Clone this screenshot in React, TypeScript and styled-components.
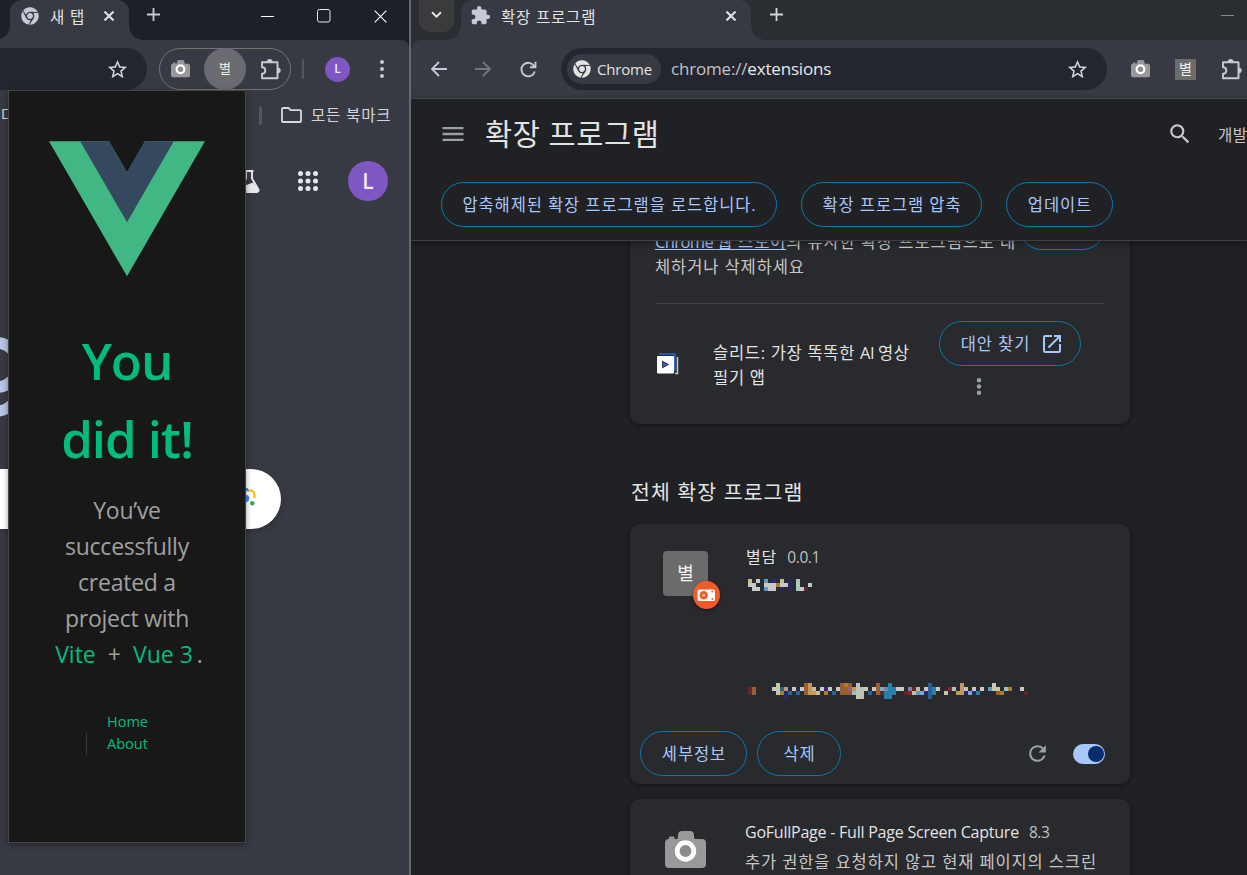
import React from "react";
import styled, { createGlobalStyle, css } from "styled-components";
import { FaChrome } from "react-icons/fa";
import { MdExtension, MdMenu, MdSearch, MdStarBorder, MdRefresh, MdOpenInNew } from "react-icons/md";

const GlobalStyle = createGlobalStyle`
  * { box-sizing: border-box; }
  body {
    margin: 0;
    overflow: hidden;
    background: #202124;
    font-family: "Open Sans", "Noto Sans CJK KR", sans-serif;
    color: #e3e3e3;
  }
  svg { display: block; flex: none; }
`;

const Desktop = styled.div`
  display: flex;
  width: 1247px;
  height: 875px;
  overflow: hidden;
`;

/* ---------- shared browser chrome ---------- */

const LeftWindow = styled.section`
  position: relative;
  display: flex;
  flex-direction: column;
  width: 411px;
  flex: none;
  background: #383a43;
  border-right: 2px solid #69696c;
  overflow: hidden;
`;

const RightWindow = styled.section`
  display: flex;
  flex-direction: column;
  flex: 1;
  min-width: 0;
  overflow: hidden;
  background: #202124;
`;

const TabStrip = styled.header<{ $bg: string; $pad: number }>`
  display: flex;
  align-items: flex-start;
  height: 40px;
  flex: none;
  padding-left: ${(p) => p.$pad}px;
  background: ${(p) => p.$bg};
`;

const Tab = styled.div<{ $width: number; $pad: number }>`
  position: relative;
  display: flex;
  align-items: center;
  width: ${(p) => p.$width}px;
  height: 40px;
  padding: 0 15px 9px ${(p) => p.$pad}px;
  background: #383a43;
  border-radius: 12px 12px 0 0;
  &::before,
  &::after {
    content: "";
    position: absolute;
    bottom: 0;
    width: 14px;
    height: 14px;
  }
  &::before {
    left: -14px;
    background: radial-gradient(circle at 0 0, transparent 13.5px, #383a43 14px);
  }
  &::after {
    right: -14px;
    background: radial-gradient(circle at 100% 0, transparent 13.5px, #383a43 14px);
  }
`;

const TabTitle = styled.span<{ $gap: number }>`
  flex: 1;
  margin-left: ${(p) => p.$gap}px;
  font-size: 15.5px;
  line-height: 20px;
  letter-spacing: 0.8px;
  white-space: nowrap;
  padding-top: 2px;
`;

const NewTab = styled.div<{ $left: number }>`
  display: flex;
  margin: 8px 0 0 ${(p) => p.$left}px;
`;

const WindowControls = styled.div`
  display: flex;
  align-items: center;
  justify-content: space-between;
  margin-left: auto;
  width: 126px;
  height: 32px;
  margin-right: 22px;
`;

const TabSearch = styled.div`
  display: flex;
  align-items: center;
  justify-content: center;
  width: 35px;
  height: 32px;
  padding-bottom: 2px;
  margin-right: 7px;
  border-radius: 0 0 11px 11px;
  background: #3b3b3d;
`;

const Toolbar = styled.div<{ $corner: string }>`
  display: flex;
  align-items: center;
  flex: none;
  height: 58px;
  background: #383a43;
  border-radius: ${(p) => p.$corner};
`;

const ToolbarBack = styled.div<{ $bg: string }>`
  flex: none;
  background: linear-gradient(${(p) => p.$bg} 10px, #383a43 10px);
`;

const Omnibox = styled.div<{ $width: number; $radius: string }>`
  display: flex;
  align-items: center;
  justify-content: space-between;
  width: ${(p) => p.$width}px;
  flex: none;
  height: 42px;
  padding: 0 18px 0 6px;
  background: #23262e;
  border-radius: ${(p) => p.$radius};
`;

const SiteChip = styled.div`
  display: flex;
  align-items: center;
  gap: 6px;
  width: 94px;
  height: 30px;
  padding-left: 6px;
  border-radius: 15px;
  background: #383a43;
  font-size: 15px;
  line-height: 28px;
  letter-spacing: -0.2px;
`;

const Url = styled.div`
  flex: 1;
  margin-left: 10px;
  font-size: 17px;
  line-height: 24px;
  letter-spacing: -0.18px;
  color: #c0c2c8;
  span { color: #e8e8ea; }
`;

const ExtensionPill = styled.div`
  display: flex;
  align-items: center;
  width: 132px;
  height: 42px;
  margin-left: 12px;
  padding-left: 11px;
  border: 1.5px solid #75736f;
  border-radius: 21px;
`;

const ActiveExtension = styled.div`
  display: flex;
  align-items: center;
  justify-content: center;
  flex: none;
  width: 42px;
  height: 42px;
  margin: 0 14px 0 14px;
  border-radius: 50%;
  background: #696a72;
`;

const Divider = styled.i<{ $height: number; $width: number }>`
  width: ${(p) => p.$width}px;
  height: ${(p) => p.$height}px;
  border-radius: 2px;
  background: #54565d;
`;

const Spacer = styled.i<{ $width: number }>`
  flex: none;
  width: ${(p) => p.$width}px;
`;

const Avatar = styled.div<{ $size: number; $font: number }>`
  display: flex;
  align-items: center;
  justify-content: center;
  width: ${(p) => p.$size}px;
  height: ${(p) => p.$size}px;
  border-radius: 50%;
  background: #7e57c2;
  color: #f1eaf8;
  font: 600 ${(p) => p.$font}px/1 "Open Sans", sans-serif;
`;

const LetterIcon = styled.div<{ $size: number; $font: number; $radius: number; $bg: string }>`
  display: flex;
  align-items: center;
  justify-content: center;
  flex: none;
  width: ${(p) => p.$size}px;
  height: ${(p) => p.$size}px;
  padding-bottom: 3px;
  border-radius: ${(p) => p.$radius}px;
  background: ${(p) => p.$bg};
  color: #f2f2f2;
  font: 400 ${(p) => p.$font}px/1 "Noto Sans CJK KR", sans-serif;
`;

/* ---------- new tab page ---------- */

const Bookmarks = styled.div`
  display: flex;
  align-items: center;
  height: 34px;
  flex: none;
  overflow: hidden;
  color: #d4d5d8;
  font-size: 15.5px;
  line-height: 20px;
  letter-spacing: 0.85px;
`;

const BookmarkStart = styled.span`
  width: 259px;
  padding-left: 1px;
`;

const BookmarkLabel = styled.span`
  margin-left: 9px;
  padding-bottom: 1px;
  white-space: nowrap;
`;

const PageActions = styled.div`
  display: flex;
  align-items: center;
  height: 40px;
  flex: none;
  margin-top: 29px;
  padding-left: 238px;
`;

const LogoRow = styled.div`
  margin-top: 134px;
  height: 86px;
  flex: none;
`;

const SearchBox = styled.div`
  display: flex;
  align-items: center;
  justify-content: flex-end;
  width: 281px;
  height: 60px;
  flex: none;
  margin-top: 48px;
  padding: 0 25px 4px 0;
  background: #fff;
  border-radius: 0 30px 30px 0;
  box-shadow: 0 2px 6px rgba(0, 0, 0, 0.22);
`;

/* ---------- extension popup ---------- */

const Popup = styled.aside`
  position: absolute;
  left: 8px;
  top: 90px;
  display: flex;
  flex-direction: column;
  align-items: center;
  width: 238px;
  height: 753px;
  padding-top: 50px;
  background: #181818;
  border: 1px solid #454547;
  box-shadow: 0 2px 6px rgba(0, 0, 0, 0.4);
  text-align: center;
`;

const Headline = styled.h1`
  width: 180px;
  margin: 44px 0 0;
  color: #00bd7e;
  font-size: 51px;
  font-weight: 600;
  line-height: 78px;
  letter-spacing: -1.1px;
`;

const Blurb = styled.h3`
  margin: 15px 0 0;
  width: 180px;
  font-size: 23px;
  font-weight: 400;
  line-height: 36px;
  letter-spacing: -0.25px;
  color: #a0a0a0;
  white-space: nowrap;
`;

const BlurbLine = styled.span`
  display: block;
`;

const StackLine = styled.span`
  display: flex;
  justify-content: center;
  padding-left: 4px;
  letter-spacing: 0;
`;

const Link = styled.a`
  color: #00bd7e;
`;

const Plain = styled.span<{ $left: number; $right: number }>`
  margin: 0 ${(p) => p.$right}px 0 ${(p) => p.$left}px;
`;

const PopupNav = styled.nav`
  display: flex;
  flex-direction: column;
  width: 82px;
  margin-top: 39px;
  text-align: left;
`;

const NavLink = styled.a<{ $bordered?: boolean }>`
  padding-left: 20px;
  border-left: 1px solid ${(p) => (p.$bordered ? "#3a3a3a" : "transparent")};
  color: #00bd7e;
  font-size: 14.5px;
  line-height: 22px;
`;

/* ---------- extensions page ---------- */

const PageHeader = styled.header`
  position: relative;
  z-index: 1;
  flex: none;
  height: 143px;
  border-top: 1px solid #47484b;
  border-bottom: 1px solid #404144;
  background: #202124;
  box-shadow: 0 2px 6px rgba(0, 0, 0, 0.4);
`;

const TitleRow = styled.div`
  display: flex;
  align-items: center;
  height: 71px;
  padding: 0 0 1px 28px;
  white-space: nowrap;
  overflow: hidden;
`;

const PageTitle = styled.h1`
  flex: none;
  width: 682px;
  margin: 0 0 0 18px;
  font-size: 29.5px;
  font-weight: 400;
  line-height: 40px;
  letter-spacing: 0.55px;
`;

const DevLabel = styled.span`
  flex: none;
  margin-left: 25px;
  font-size: 15.5px;
  letter-spacing: 0.6px;
  color: #c7c7c7;
`;

const ButtonRow = styled.div`
  display: flex;
  gap: 24px;
  padding: 12px 0 0 30px;
`;

const PillButton = styled.button<{ $width: number; $icon?: boolean }>`
  display: flex;
  align-items: center;
  justify-content: center;
  gap: 10px;
  flex: none;
  width: ${(p) => p.$width}px;
  height: 45px;
  padding: 0 0 0 ${(p) => (p.$icon ? 5 : 1)}px;
  border: 1px solid #0b78ab;
  border-radius: 23px;
  background: transparent;
  color: #a8c7fa;
  font-family: inherit;
  font-size: 16.5px;
  line-height: 24px;
  letter-spacing: 0.9px;
  white-space: nowrap;
`;

const Scroller = styled.main`
  flex: 1;
  min-height: 0;
  overflow: hidden;
  padding-left: 219px;
`;

const cardSurface = css`
  width: 500px;
  background: #292a2d;
  border-radius: 10px;
  box-shadow: 0 1px 4px rgba(0, 0, 0, 0.45);
`;

const ReviewCard = styled.article`
  ${cardSurface}
  height: 223px;
  margin-top: -40px;
  padding: 4px 25px 0;
`;

const ReviewTop = styled.div`
  display: flex;
  height: 99px;
  border-bottom: 1px solid #3f4043;
`;

const ReviewText = styled.p`
  width: 365px;
  margin: 24px 0 0;
  font-size: 16.5px;
  line-height: 25px;
  letter-spacing: 0.9px;
  color: #c7c7c7;
  white-space: nowrap;
`;

const StoreLink = styled.a`
  color: #a8c7fa;
  text-decoration: underline;
`;

const Latin = styled.span<{ $ls: number }>`
  letter-spacing: ${(p) => p.$ls}px;
`;

const ReviewItem = styled.div`
  display: flex;
  padding-left: 2px;
`;

const SlidIcon = styled.div`
  margin-top: 49px;
  width: 56px;
`;

const ItemName = styled.div`
  width: 226px;
  margin-top: 36px;
  font-size: 16.5px;
  line-height: 25px;
  letter-spacing: 0.7px;
  white-space: nowrap;
`;

const ItemActions = styled.div`
  display: flex;
  flex-direction: column;
  margin-top: 17px;
`;

const MoreWrap = styled.div`
  margin: 12px 0 0 37px;
`;

const SectionTitle = styled.h2`
  height: 30px;
  margin: 53px 0 17px 1px;
  font-size: 20.5px;
  font-weight: 400;
  line-height: 30px;
  letter-spacing: 1.1px;
`;

const ExtensionCard = styled.article`
  ${cardSurface}
  display: flex;
  flex-direction: column;
  height: 260px;
  margin-bottom: 15px;
`;

const CardBody = styled.div`
  display: flex;
  padding: 20px 0 0 33px;
`;

const IconHolder = styled.div<{ $width: number; $top: number; $left?: number }>`
  position: relative;
  width: ${(p) => p.$width}px;
  padding: ${(p) => p.$top}px 0 0 ${(p) => p.$left ?? 0}px;
`;

const UnpackedBadge = styled.div`
  position: absolute;
  left: 30px;
  top: 37px;
  border-radius: 50%;
  box-shadow: 0 1px 3px rgba(0, 0, 0, 0.6);
`;

const CardText = styled.div`
  display: flex;
  flex-direction: column;
  white-space: nowrap;
`;

const NameRow = styled.div<{ $ls: number }>`
  display: flex;
  gap: 10px;
  height: 26px;
  font-size: 16px;
  line-height: 27px;
  letter-spacing: ${(p) => p.$ls}px;
`;

const Version = styled.span`
  color: #bdc1c6;
  font-size: 15.5px;
  letter-spacing: -0.4px;
`;

const Description = styled.div`
  margin-top: 4px;
  font-size: 16.5px;
  line-height: 26px;
  letter-spacing: 0.87px;
  color: #c7c7c7;
`;

const MosaicSpace = styled.div<{ $top: number }>`
  margin: ${(p) => p.$top}px 0 0 2px;
`;

const CardFooter = styled.footer`
  display: flex;
  align-items: center;
  gap: 10px;
  margin-top: auto;
  padding: 0 25px 8px 10px;
`;

const Toggle = styled.div`
  display: flex;
  align-items: center;
  justify-content: flex-end;
  width: 32px;
  height: 20px;
  margin-left: 13px;
  padding-right: 1px;
  border-radius: 10px;
  background: #a8c7fa;
  &::after {
    content: "";
    width: 16px;
    height: 16px;
    border-radius: 50%;
    background: #062e6f;
  }
`;

const ReloadSpot = styled.div`
  margin-left: auto;
  color: #9aa0a6;
`;

/* ---------- drawings ---------- */

const Cross = ({ size = 10, w = 2, color = "#e3e3e3" }) => (
  <svg width={size} height={size} viewBox="0 0 10 10" stroke={color} strokeWidth={(w * 10) / size}>
    <path d="M.5.5l9 9M9.5.5l-9 9" />
  </svg>
);

const Plus = ({ color = "#c7cad6" }) => (
  <svg width="13" height="13" viewBox="0 0 13 13" stroke={color} strokeWidth="1.8">
    <path d="M6.500 0v13M0 6.500h13" />
  </svg>
);

const Dots = ({ height, r, color }: { height: number; r: number; color: string }) => (
  <svg width="6" height={height} fill={color}>
    <circle cx="3" cy={r} r={r} />
    <circle cx="3" cy={height / 2} r={r} />
    <circle cx="3" cy={height - r} r={r} />
  </svg>
);

const Camera = ({ width }: { width: number }) => (
  <svg width={width} height={(width * 37) / 41} viewBox="0 0 41 37">
    <path
      fill="#999"
      d="M4 8V6.500a1 1 0 0 1 1-1h3.500a1 1 0 0 1 1 1V8h2.500c.8-.5 1-2 1-4 0-2.500 1.500-4 4-4h8c2.500 0 4 1.500 4 4 0 2 .2 3.500 1 4h7a4 4 0 0 1 4 4v21a4 4 0 0 1-4 4H4a4 4 0 0 1-4-4V12a4 4 0 0 1 4-4z"
    />
    <circle cx="20.500" cy="20" r="8.300" fill="#8c8c8c" stroke="#fff" strokeWidth="4.800" />
  </svg>
);

const PuzzleOutline = () => (
  <svg width="22" height="21" viewBox="0 0 22 21">
    <path
      fill="none"
      stroke="#c7cad6"
      strokeWidth="1.900"
      strokeLinejoin="round"
      d="M2 3.200h15.500v16H2v-4.500c2 0 3.300-1.400 3.300-3.200S4 8.200 2 8.200z"
    />
    <path fill="#c7cad6" d="M6.800 3a2.900 2.900 0 0 1 5.800 0zM17.800 8.400a2.900 2.900 0 0 1 0 5.800z" />
  </svg>
);

const Arrow = ({ color, flip }: { color: string; flip?: boolean }) => (
  <svg width="16" height="16" viewBox="0 0 16 16" fill="none" stroke={color} strokeWidth="1.800">
    <path d={flip ? "M0 8h14.500M8 1l7 7-7 7" : "M16 8H1.500M8 1L1 8l7 7"} />
  </svg>
);

const Reload = () => (
  <svg width="17" height="17" viewBox="0 0 17 17" fill="none" stroke="#c7cad6" strokeWidth="1.900">
    <path d="M14.800 10.500a6.800 6.800 0 1 1-.6-5.300M15.500.8v5.500H10" />
  </svg>
);

const Folder = () => (
  <svg width="21" height="16" viewBox="0 0 21 16" fill="none" stroke="#d7d8dc" strokeWidth="1.800">
    <path strokeLinejoin="round" d="M1 2a1 1 0 0 1 1-1h5.500l2.200 2.200H19a1 1 0 0 1 1 1V14a1 1 0 0 1-1 1H2a1 1 0 0 1-1-1z" />
  </svg>
);

const Flask = () => (
  <svg width="22" height="23" viewBox="0 0 22 23">
    <path d="M6.500 1h9M8 1v7.500L1.800 19c-.9 1.500 0 3 1.600 3h15.200c1.600 0 2.500-1.500 1.600-3L14 8.500V1" fill="none" stroke="#e8e8ea" strokeWidth="1.900" />
    <path d="M2 19l4-3 9-3.500 5.500 7c.8 1.400 0 3-1.500 3h-15C2 22 1 20.500 2 19z" fill="#e8e8ea" />
  </svg>
);

const AppsGrid = () => (
  <svg width="20" height="20" viewBox="0 0 20 20" fill="#e8e8ea">
    {[2.5, 10, 17.5].flatMap((y) => [2.5, 10, 17.5].map((x) => <circle key={`${x}-${y}`} cx={x} cy={y} r="2.500" />))}
  </svg>
);

const GoogleArc = () => (
  <svg width="8" height="84" viewBox="0 0 8 84" fill="none" stroke="#b8c5e6">
    <circle cx="-4" cy="30" r="22.300" strokeWidth="11.500" />
    <path d="M-6 76.500c8 0 14-3 18-7" strokeWidth="11" />
  </svg>
);

const Lens = () => (
  <svg width="20" height="20" viewBox="0 0 20 20" fill="none">
    <circle cx="9.500" cy="11.500" r="3.700" fill="#4285f4" />
    <path d="M6 3.500l2-2.500h3.500l2.500 3.500z" fill="#4285f4" />
    <path d="M12.500 3.500h2a4 4 0 0 1 4 4V11" stroke="#fbbc04" strokeWidth="2.200" />
    <circle cx="16.300" cy="16.300" r="2.200" fill="#34a853" />
    <path d="M2 8V7.500a4 4 0 0 1 4-4" stroke="#ea4335" strokeWidth="2.400" />
  </svg>
);

const VueLogo = () => (
  <svg width="156" height="135.500" viewBox="0 0 261.760 226.690">
    <path fill="#41b883" d="M161.100 0l-30.230 52.350L100.650 0H0l130.870 226.690L261.750 0z" />
    <path fill="#34495e" d="M161.100 0l-30.230 52.350L100.650 0h-48.300l78.520 136.010L209.400 0z" />
  </svg>
);

const SlidLogo = () => (
  <svg width="23" height="22" viewBox="0 0 23 22">
    <path d="M20.500 4v16.500H18" fill="none" stroke="#c9c9c9" strokeWidth="1.500" />
    <path d="M2 1h15.800v17" fill="none" stroke="#2b67d6" strokeWidth="1.600" />
    <rect x="0" y="3" width="17" height="17.500" rx="1" fill="#fff" />
    <path d="M5.500 8.300l6 3.200-6 3.200z" fill="#2a5fd0" stroke="#303645" strokeWidth="1" />
  </svg>
);

const UnpackedGlyph = () => (
  <svg width="27" height="28" viewBox="0 0 27 28">
    <ellipse cx="13.500" cy="14" rx="13.500" ry="14" fill="#f25a2a" />
    <rect x="4.500" y="8.500" width="17.500" height="11.500" rx="1.500" fill="#fff" />
    <circle cx="10.700" cy="14.200" r="4.200" fill="#f25a2a" />
    <circle cx="10.700" cy="14.200" r="1.500" fill="#fbc5b0" />
    <circle cx="19.300" cy="10.500" r="1" fill="#f25a2a" />
    <circle cx="19.300" cy="18" r="1" fill="#f25a2a" />
  </svg>
);

const palette: Record<string, string> = {
  g: "#c8c8c8", t: "#c8bc98", b: "#6098c0", n: "#282860", v: "#282880", m: "#a8c8c0",
  y: "#a88028", r: "#602828", R: "#802828", o: "#986030", O: "#c09860", B: "#286098",
  p: "#c8c8a8", k: "#c09880", u: "#986080", c: "#98c0c8", s: "#b8c4b8", l: "#80a8c8",
  d: "#8080a8", T: "#2880a8",
};

/* each entry is one column of 4px blocks, top to bottom; "." leaves a block empty */
const nameMosaic = ["tg.", ".gg", "g.g", "", "bgb", ".gg", "vgg", ".y.", "tgn", ".g.", "nnn", "", "mmm", "..g", "..r", ".g."];
const detailMosaic = [
  ".rr", ".oo", "", "", "", "", ".g", "ppp", ".By", ".knn", "..B", ".g", "..B", ".g", "ooo", "OOO", ".tO", "..t",
  ".g", ".vy", ".g", "..B", ".g", "ooo", "yoo", "ouo", ".Oc", "sssp", ".sss", ".g", "..B", ".g", "ooo", ".lr", ".dTT",
  "TTTT", ".TT", ".g", ".g", "..r", ".dR", ".rt", ".tb", "..l", ".gv", "BBBB", ".TT", ".g", "", "..p", ".R", ".m",
  "..O", "OOO", ".pn", "..l", ".gn", "..T", ".g", "", ".b", "gp", ".po", "..y", ".c", ".y", "", "", ".g", "..r",
];

const Mosaic = ({ columns, rows }: { columns: string[]; rows: number }) => (
  <svg width={columns.length * 4} height={rows * 4} shapeRendering="crispEdges">
    {columns.flatMap((col, x) =>
      [...col].map((c, y) => (c === "." ? null : <rect key={`${x}-${y}`} x={x * 4} y={y * 4} width="4" height="4" fill={palette[c]} />))
    )}
  </svg>
);

/* ---------- windows ---------- */

const NewTabWindow = () => (
  <LeftWindow>
    <TabStrip $bg="#1c2027" $pad={10}>
      <Tab $width={119} $pad={11}>
        <FaChrome size={18} color="#c7cad6" />
        <TabTitle $gap={11}>새 탭</TabTitle>
        <Cross />
      </Tab>
      <NewTab $left={18}><Plus /></NewTab>
      <WindowControls>
        <svg width="13" height="2"><rect width="13" height="1" y="1" fill="#fff" /></svg>
        <svg width="14" height="14" fill="none" stroke="#e8e8e8"><rect x=".5" y=".5" width="12.500" height="12.500" rx="2" /></svg>
        <Cross size={13} w={1.1} color="#fff" />
      </WindowControls>
    </TabStrip>
    <ToolbarBack $bg="#1c2027">
      <Toolbar $corner="0 8px 0 0">
        <Omnibox $width={147} $radius="0 21px 21px 0">
          <span />
          <MdStarBorder size={23} color="#d4d5d9" />
        </Omnibox>
        <ExtensionPill>
          <Camera width={19} />
          <ActiveExtension>
            <LetterIcon $size={19} $font={13} $radius={0} $bg="#6c6c69">별</LetterIcon>
          </ActiveExtension>
          <PuzzleOutline />
        </ExtensionPill>
        <Spacer $width={11} />
        <Divider $width={2} $height={20} />
        <Spacer $width={21} />
        <Avatar $size={25} $font={12}>L</Avatar>
        <Spacer $width={29} />
        <Dots height={18} r={2} color="#c7cad6" />
      </Toolbar>
    </ToolbarBack>
    <Bookmarks>
      <BookmarkStart>다</BookmarkStart>
      <Divider $width={3} $height={19} />
      <Spacer $width={19} />
      <Folder />
      <BookmarkLabel>모든 북마크</BookmarkLabel>
    </Bookmarks>
    <PageActions>
      <Flask />
      <Spacer $width={38} />
      <AppsGrid />
      <Spacer $width={30} />
      <Avatar $size={40} $font={21}>L</Avatar>
    </PageActions>
    <LogoRow><GoogleArc /></LogoRow>
    <SearchBox><Lens /></SearchBox>
    <Popup>
      <VueLogo />
      <Headline>You<br />did it!</Headline>
      <Blurb>
        <BlurbLine>You’ve</BlurbLine>
        <BlurbLine>successfully</BlurbLine>
        <BlurbLine>created a</BlurbLine>
        <BlurbLine>project with</BlurbLine>
        <StackLine>
          <Link>Vite</Link>
          <Plain $left={12} $right={12}>+</Plain>
          <Link>Vue 3</Link>
          <Plain $left={4} $right={0}>.</Plain>
        </StackLine>
      </Blurb>
      <PopupNav>
        <NavLink>Home</NavLink>
        <NavLink $bordered>About</NavLink>
      </PopupNav>
    </Popup>
  </LeftWindow>
);

const ExtensionsWindow = () => (
  <RightWindow>
    <TabStrip $bg="#2a2d31" $pad={8}>
      <TabSearch>
        <svg width="11" height="8" fill="none" stroke="#e3e3e3" strokeWidth="2"><path d="M1 1.200l4.500 4.500L10 1.200" /></svg>
      </TabSearch>
      <Tab $width={290} $pad={9}>
        <MdExtension size={21} color="#c7cad6" />
        <TabTitle $gap={10}>확장 프로그램</TabTitle>
        <Cross />
      </Tab>
      <NewTab $left={19}><Plus color="#d4d5d9" /></NewTab>
      <svg width="13" height="1" style={{ margin: "15px 13px 0 auto" }}><rect width="13" height="1" fill="#86888b" /></svg>
    </TabStrip>
    <ToolbarBack $bg="#2a2d31">
      <Toolbar $corner="10px 0 0 0">
        <Spacer $width={20} />
        <Arrow color="#c7cad6" />
        <Spacer $width={28} />
        <Arrow color="#75767b" flip />
        <Spacer $width={29} />
        <Reload />
        <Spacer $width={24} />
        <Omnibox $width={546} $radius="21px">
          <SiteChip>
            <FaChrome size={18} color="#e3e3e3" />
            Chrome
          </SiteChip>
          <Url>chrome://<span>extensions</span></Url>
          <MdStarBorder size={23} color="#d4d5d9" />
        </Omnibox>
        <Spacer $width={24} />
        <Camera width={19} />
        <Spacer $width={25} />
        <LetterIcon $size={21} $font={14} $radius={0} $bg="#6c6c6a">별</LetterIcon>
        <Spacer $width={25} />
        <PuzzleOutline />
      </Toolbar>
    </ToolbarBack>
    <PageHeader>
      <TitleRow>
        <MdMenu size={28} color="#9aa0a6" />
        <PageTitle>확장 프로그램</PageTitle>
        <MdSearch size={26} color="#c7c7c7" />
        <DevLabel>개발</DevLabel>
      </TitleRow>
      <ButtonRow>
        <PillButton $width={336}>압축해제된 확장 프로그램을 로드합니다.</PillButton>
        <PillButton $width={181}>확장 프로그램 압축</PillButton>
        <PillButton $width={107}>업데이트</PillButton>
      </ButtonRow>
    </PageHeader>
    <Scroller>
      <ReviewCard>
        <ReviewTop>
          <ReviewText>
            <StoreLink><Latin $ls={-0.6}>Chrome </Latin>웹 스토어</StoreLink>의 유사한 확장 프로그램으로 대<br />체하거나 삭제하세요
          </ReviewText>
          <PillButton $width={86} />
        </ReviewTop>
        <ReviewItem>
          <SlidIcon><SlidLogo /></SlidIcon>
          <ItemName>슬리드: 가장 똑똑한 <Latin $ls={-0.5}>AI </Latin>영상<br />필기 앱</ItemName>
          <ItemActions>
            <PillButton $width={142} $icon>대안 찾기<MdOpenInNew size={24} /></PillButton>
            <MoreWrap><Dots height={17} r={2.2} color="#9aa0a6" /></MoreWrap>
          </ItemActions>
        </ReviewItem>
      </ReviewCard>
      <SectionTitle>전체 확장 프로그램</SectionTitle>
      <ExtensionCard>
        <CardBody>
          <IconHolder $width={83} $top={7}>
            <LetterIcon $size={45} $font={18} $radius={4} $bg="#6b6b6b">별</LetterIcon>
            <UnpackedBadge><UnpackedGlyph /></UnpackedBadge>
          </IconHolder>
          <CardText>
            <NameRow $ls={0.9}>별담<Version>0.0.1</Version></NameRow>
            <MosaicSpace $top={9}><Mosaic columns={nameMosaic} rows={3} /></MosaicSpace>
            <MosaicSpace $top={92}><Mosaic columns={detailMosaic} rows={4} /></MosaicSpace>
          </CardText>
        </CardBody>
        <CardFooter>
          <PillButton $width={107}>세부정보</PillButton>
          <PillButton $width={84}>삭제</PillButton>
          <ReloadSpot><MdRefresh size={25} /></ReloadSpot>
          <Toggle />
        </CardFooter>
      </ExtensionCard>
      <ExtensionCard>
        <CardBody>
          <IconHolder $width={82} $top={12} $left={2}><Camera width={41} /></IconHolder>
          <CardText>
            <NameRow $ls={-0.23}>GoFullPage - Full Page Screen Capture<Version>8.3</Version></NameRow>
            <Description>추가 권한을 요청하지 않고 현재 페이지의 스크린</Description>
          </CardText>
        </CardBody>
      </ExtensionCard>
    </Scroller>
  </RightWindow>
);

export default function App() {
  return (
    <Desktop>
      <GlobalStyle />
      <NewTabWindow />
      <ExtensionsWindow />
    </Desktop>
  );
}
